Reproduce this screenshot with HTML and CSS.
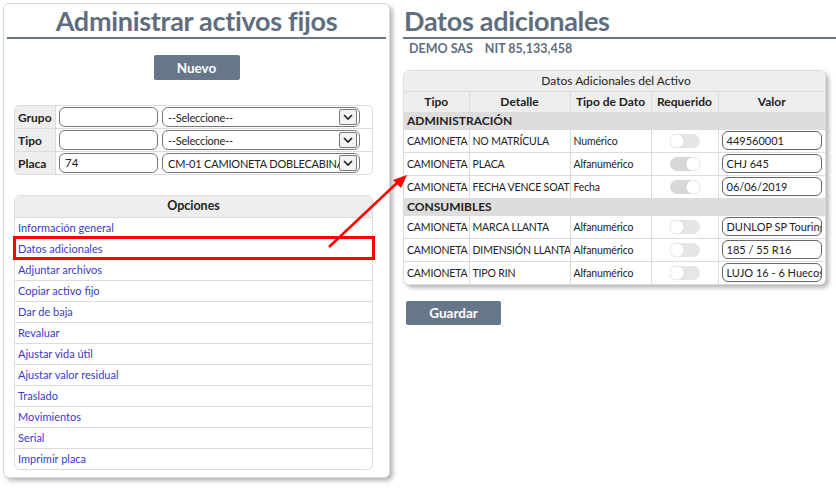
FILE: index.html
```html
<!DOCTYPE html>
<html lang="es">
<head>
<meta charset="utf-8">
<title>Administrar activos fijos</title>
<link rel="stylesheet" href="styles.css">
</head>
<body>
<div class="page">
  <section class="left-panel">
    <h1 class="title">Administrar activos fijos</h1>
    <div class="btn-row"><button class="btn">Nuevo</button></div>

    <div class="filter">
      <div class="frow">
        <div class="flabel">Grupo</div>
        <div class="tinput"></div>
        <div class="select"><span class="stext">--Seleccione--</span><span class="sarrow"><svg width="12" height="8" viewBox="0 0 12 8"><path d="M2 2 L6 6 L10 2" fill="none" stroke="#222" stroke-width="1.6"/></svg></span></div>
      </div>
      <div class="frow">
        <div class="flabel">Tipo</div>
        <div class="tinput"></div>
        <div class="select"><span class="stext">--Seleccione--</span><span class="sarrow"><svg width="12" height="8" viewBox="0 0 12 8"><path d="M2 2 L6 6 L10 2" fill="none" stroke="#222" stroke-width="1.6"/></svg></span></div>
      </div>
      <div class="frow">
        <div class="flabel">Placa</div>
        <div class="tinput">74</div>
        <div class="select"><span class="stext">CM-01 CAMIONETA DOBLECABINA</span><span class="sarrow"><svg width="12" height="8" viewBox="0 0 12 8"><path d="M2 2 L6 6 L10 2" fill="none" stroke="#222" stroke-width="1.6"/></svg></span></div>
      </div>
    </div>

    <div class="options">
      <div class="ohead">Opciones</div>
      <a class="oitem">Información general</a>
      <a class="oitem">Datos adicionales</a>
      <a class="oitem">Adjuntar archivos</a>
      <a class="oitem">Copiar activo fijo</a>
      <a class="oitem">Dar de baja</a>
      <a class="oitem">Revaluar</a>
      <a class="oitem">Ajustar vida útil</a>
      <a class="oitem">Ajustar valor residual</a>
      <a class="oitem">Traslado</a>
      <a class="oitem">Movimientos</a>
      <a class="oitem">Serial</a>
      <a class="oitem">Imprimir placa</a>
    </div>
  </section>

  <section class="right">
    <h1 class="title title-right">Datos adicionales</h1>
    <div class="company"><span>DEMO SAS</span><span>NIT 85,133,458</span></div>

    <div class="card">
      <table class="data">
        <colgroup>
          <col class="c1"><col class="c2"><col class="c3"><col class="c4"><col class="c5">
        </colgroup>
        <tr class="caption-row"><td colspan="5">Datos Adicionales del Activo</td></tr>
        <tr class="head-row"><th>Tipo</th><th>Detalle</th><th>Tipo de Dato</th><th>Requerido</th><th>Valor</th></tr>
        <tr class="section-row"><td colspan="5">ADMINISTRACIÓN</td></tr>
        <tr><td>CAMIONETA</td><td>NO MATRÍCULA</td><td>Numérico</td><td class="tc"><span class="toggle"></span></td><td><div class="vinput">449560001</div></td></tr>
        <tr><td>CAMIONETA</td><td>PLACA</td><td>Alfanumérico</td><td class="tc"><span class="toggle on"></span></td><td><div class="vinput">CHJ 645</div></td></tr>
        <tr><td>CAMIONETA</td><td>FECHA VENCE SOAT</td><td>Fecha</td><td class="tc"><span class="toggle on"></span></td><td><div class="vinput">06/06/2019</div></td></tr>
        <tr class="section-row"><td colspan="5">CONSUMIBLES</td></tr>
        <tr><td>CAMIONETA</td><td>MARCA LLANTA</td><td>Alfanumérico</td><td class="tc"><span class="toggle"></span></td><td><div class="vinput">DUNLOP SP Touring</div></td></tr>
        <tr><td>CAMIONETA</td><td>DIMENSIÓN LLANTA</td><td>Alfanumérico</td><td class="tc"><span class="toggle"></span></td><td><div class="vinput">185 / 55 R16</div></td></tr>
        <tr><td>CAMIONETA</td><td>TIPO RIN</td><td>Alfanumérico</td><td class="tc"><span class="toggle"></span></td><td><div class="vinput">LUJO 16 - 6 Huecos</div></td></tr>
      </table>
    </div>

    <button class="btn guardar">Guardar</button>
  </section>

  <div class="highlight"></div>
  <svg class="arrow" width="836" height="489" viewBox="0 0 836 489">
    <line x1="329" y1="247" x2="398" y2="182" stroke="#ff0000" stroke-width="2.5"/>
    <polygon points="407,175 393,180 401,188" fill="#ff0000"/>
  </svg>
</div>
</body>
</html>
```
FILE: styles.css
```css
* { box-sizing: border-box; }
html, body { margin: 0; padding: 0; background: #fff; overflow: hidden; }
body {
  font-family: Lato, "Open Sans", "Liberation Sans", sans-serif;
  color: #222;
  font-size: 12px;
}
.page {
  position: relative;
  width: 836px;
  height: 489px;
  display: flex;
  align-items: flex-start;
  padding: 3px 0 0 3px;
}
.left-panel {
  width: 387px;
  height: 475px;
  border: 1px solid #d9d9d9;
  border-radius: 6px;
  box-shadow: 3px 3px 4px rgba(0,0,0,0.28);
  padding: 0 3px;
  background: #fff;
  display: flex;
  flex-direction: column;
}
.title {
  margin: 0;
  font-size: 27px;
  font-weight: 700;
  color: #5f6e7e;
  line-height: 33px;
  height: 35px;
  border-bottom: 2px solid #6b7a8a;
  text-align: center;
  letter-spacing: -0.3px;
}
.btn-row { display: flex; justify-content: center; margin-top: 16px; }
.btn {
  font-family: inherit;
  background: #66778a;
  color: #fff;
  border: none;
  border-radius: 2px;
  font-weight: 700;
  font-size: 13.5px;
  width: 86px;
  height: 25px;
  padding: 0;
}
.filter {
  margin: 25px 0 0 7px;
  width: 359px;
  border: 1px solid #dcdcdc;
  border-radius: 5px;
  overflow: hidden;
}
.frow {
  display: flex;
  align-items: center;
  height: 23px;
  border-bottom: 1px solid #dcdcdc;
}
.frow:last-child { border-bottom: none; height: 22px; }
.flabel {
  width: 41px;
  align-self: stretch;
  background: #eeeeee;
  border-right: 1px solid #dcdcdc;
  font-weight: 700;
  display: flex;
  align-items: center;
  padding-left: 3px;
  font-size: 12px;
}
.tinput {
  margin-left: 3px;
  width: 99px;
  height: 20px;
  border: 1px solid #777;
  border-radius: 6px;
  padding-left: 5px;
  line-height: 18px;
  font-size: 11.5px;
}
.select {
  margin-left: 4px;
  width: 198px;
  height: 20px;
  border: 1px solid #777;
  border-radius: 6px;
  display: flex;
  align-items: center;
  justify-content: space-between;
  padding: 0 2px 0 5px;
  overflow: hidden;
}
.stext {
  white-space: nowrap;
  overflow: hidden;
  font-size: 11px;
  letter-spacing: -0.2px;
  flex: 1;
}
.sarrow {
  flex: none;
  width: 18px;
  height: 16px;
  border: 1px solid #7a7a7a;
  border-radius: 2px;
  background: #f3f3f3;
  display: flex;
  align-items: center;
  justify-content: center;
}
.options {
  margin: 20px 0 0 7px;
  width: 359px;
  border: 1px solid #dcdcdc;
  border-radius: 6px;
  overflow: hidden;
  display: flex;
  flex-direction: column;
}
.ohead {
  height: 21px;
  background: #eeeeee;
  text-align: center;
  font-weight: 700;
  line-height: 20px;
  font-size: 12.5px;
}
.oitem {
  height: 21px;
  border-top: 1px solid #dcdcdc;
  color: #3a3acc;
  padding-left: 3px;
  line-height: 19px;
  font-size: 11px;
}
.right {
  margin-left: 13px;
  margin-top: 1px;
  flex: 1;
  display: flex;
  flex-direction: column;
  align-items: flex-start;
}
.title-right {
  align-self: stretch;
  text-align: left;
  padding-left: 1px;
}
.company {
  margin: 2px 0 0 6px;
  display: flex;
  gap: 12px;
  font-weight: 700;
  color: #5f6e7e;
  font-size: 12.5px;
  line-height: 16px;
}
.card {
  margin-top: 13px;
  width: 423px;
  border: 1px solid #dcdcdc;
  border-radius: 6px;
  box-shadow: 3px 3px 4px rgba(0,0,0,0.28);
  overflow: hidden;
  background: #fff;
}
.data {
  width: 421px;
  border-collapse: collapse;
  table-layout: fixed;
  font-size: 10.5px;
  letter-spacing: -0.15px;
}
.c1 { width: 65px; } .c2 { width: 101px; } .c3 { width: 81px; } .c4 { width: 67px; } .c5 { width: 107px; }
.data td, .data th {
  border: 1px solid #dcdcdc;
  padding: 0 0 0 3px;
  white-space: nowrap;
  overflow: hidden;
  height: 23px;
  text-align: left;
}
.data tr > :first-child { border-left: none; }
.data tr > :last-child { border-right: none; }
.caption-row td {
  border-top: none;
  height: 20px;
  background: #eeeeee;
  text-align: center;
  font-size: 12px;
  letter-spacing: 0;
}
.head-row th {
  height: 21px;
  background: #eeeeee;
  font-weight: 700;
  text-align: center;
  font-size: 12px;
  letter-spacing: 0;
  padding: 0;
}
.section-row td {
  height: 17px;
  background: #dddddd;
  font-weight: 700;
  font-size: 12px;
  letter-spacing: 0;
}
.data tr:last-child td { border-bottom: none; }
.data td.tc { text-align: center; padding: 0; }
.toggle {
  display: inline-block;
  vertical-align: middle;
  width: 30px;
  height: 14px;
  border-radius: 7px;
  background: #e6e6e6;
  position: relative;
}
.toggle::after {
  content: "";
  position: absolute;
  top: 0;
  left: 0;
  width: 14px;
  height: 14px;
  border-radius: 50%;
  background: #fff;
  box-shadow: 0 0 1px rgba(0,0,0,0.35);
}
.toggle.on { background: #d8d8d8; }
.toggle.on::after { left: 16px; }
.vinput {
  width: 100px;
  height: 19px;
  border: 1px solid #666;
  border-radius: 6px;
  padding-left: 4px;
  line-height: 17px;
  font-size: 11px;
  letter-spacing: 0;
  white-space: nowrap;
  overflow: hidden;
}
.guardar {
  margin: 16px 0 0 3px;
  width: 95px;
  height: 24px;
}
.highlight {
  position: absolute;
  left: 13px;
  top: 236px;
  width: 362px;
  height: 24px;
  border: 3px solid #ff0000;
}
.arrow {
  position: absolute;
  left: 0;
  top: 0;
  pointer-events: none;
}
```
